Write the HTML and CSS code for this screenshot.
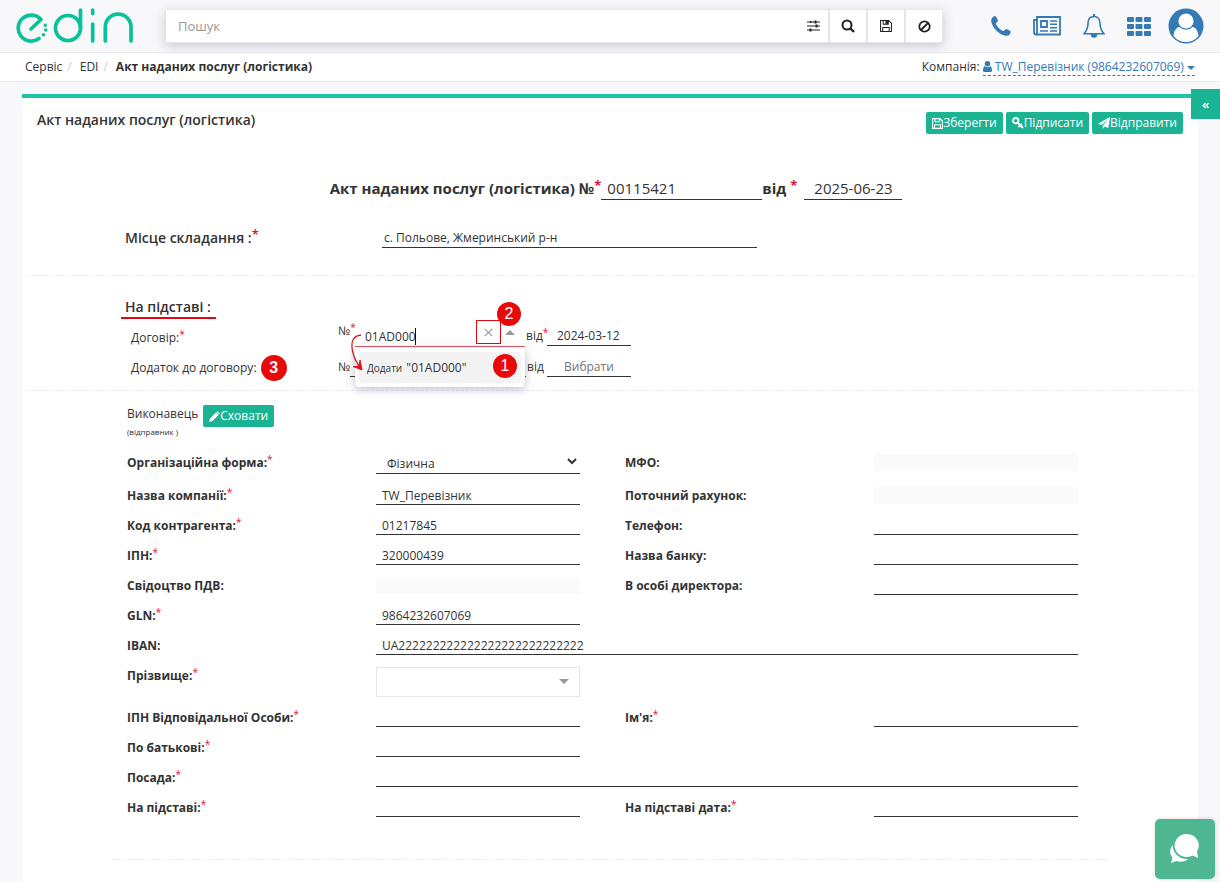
FILE: index.html
```
<!DOCTYPE html>
<html lang="uk">
<head>
    <meta charset="UTF-8">
    <meta name="viewport" content="width=device-width, initial-scale=1.0">
    <title>Акт наданих послуг (логістика)</title>
    <link rel="stylesheet" href="styles.css">
</head>
<body>
    <header class="topbar">
        <a href="#" class="logo" aria-label="edin">
            <svg width="118" height="38" viewBox="16 7 118 38" fill="none" stroke="#0ac29a" stroke-width="3.700" stroke-linecap="round" stroke-linejoin="round">
                <path d="M31 29L41 19.500A13 13 0 1 0 39 38.500"/>
                <circle cx="68" cy="28" r="12.500"/>
                <path d="M80.500 10V28M92.700 10V13.500M92.700 24V41M105.300 41V27A12.800 12.800 0 0 1 131 27V41"/>
                <g fill="#0ac29a" stroke="none">
                    <circle cx="45.300" cy="25.300" r="1.700"/>
                    <circle cx="45.700" cy="30" r="1.800"/>
                    <circle cx="43.500" cy="34.700" r="1.800"/>
                </g>
            </svg>
        </a>
        <form class="search">
            <input type="text" class="search-input" placeholder="Пошук" aria-label="Пошук">
            <button type="button" class="search-btn search-filter" aria-label="Фільтр">
                <svg width="13" height="12" viewBox="0 0 13 12" stroke="#222" fill="#222"><path d="M0 2H13M0 6H13M0 10H13" stroke-width="1.200"/><path d="M7.500.5h2v3h-2zM8.500 4.500h2v3h-2zM2.500 8.500h2v3h-2z" stroke="none"/><path d="M3 1h1.500v2H3z" stroke="none"/></svg>
            </button>
            <button type="button" class="search-btn" aria-label="Шукати">
                <svg width="14" height="14" viewBox="0 0 14 14" fill="none" stroke="#222" stroke-width="2"><circle cx="6" cy="6" r="4.500"/><path d="M9.300 9.300L13 13" stroke-width="2.400"/></svg>
            </button>
            <button type="button" class="search-btn" aria-label="Зберегти пошук">
                <svg width="12" height="12" viewBox="0 0 13 13" fill="none" stroke="#222" stroke-width="1.100"><path d="M.6.6H9.500L12.400 3.500V12.400H.6zM3 12V8H10V12M3.500 1V4.500H9V1"/><path d="M6.500 1H8V4H6.500z" fill="#222"/></svg>
            </button>
            <button type="button" class="search-btn" aria-label="Скинути">
                <svg width="13" height="13" viewBox="0 0 13 13" fill="none" stroke="#222" stroke-width="1.800"><circle cx="6.500" cy="6.500" r="5.200"/><path d="M3 10L10 3"/></svg>
            </button>
        </form>
        <nav class="top-icons">
            <a href="#" aria-label="Телефон"><svg width="20" height="20" viewBox="0 0 20 20" fill="#337ab7"><path d="M1.200 1.700C2.500.6 4 .1 4.900.4C5.600 1.200 6.600 3.700 7 4.800C7.100 5.800 4.800 6.700 4.900 7.700C5.600 10.300 9.500 14.200 12.200 15C13.300 15.200 14.200 12.800 15.300 12.900C16.300 13.300 18.800 14.400 19.600 15.200C19.900 16.200 19.300 18 18.200 19C17 20 14.800 20.100 12.800 19.300C7 17 2.700 12.700.7 7.200C0 5.200 0 3 1.200 1.700z"/></svg></a>
            <a href="#" aria-label="Новини"><svg width="28" height="20" viewBox="0 0 28 20" fill="none" stroke="#337ab7" stroke-width="1.800"><path d="M4 17V1H27V18.500H3C1.500 18.500 1 17.500 1 16.500V4H4M4 17Q4 18.500 2.500 18.500"/><path d="M8 5H14V11H8z"/><path d="M7 15H15M17 5H24M17 8.300H24M17 11.700H24M17 15H24" stroke-width="1.500"/></svg></a>
            <a href="#" aria-label="Сповіщення"><svg width="22" height="24" viewBox="0 0 22 24" fill="none" stroke="#337ab7" stroke-width="1.600"><path d="M11 2.500C7 2.500 5 5.500 5 9.500C5 14.500 3.500 17 1 19.800H21C18.500 17 17 14.500 17 9.500C17 5.500 15 2.500 11 2.500z"/><path d="M11 0V3" stroke-width="2"/><path d="M8.500 20.500a2.500 2.500 0 0 0 5 0z" fill="#337ab7"/></svg></a>
            <a href="#" aria-label="Додатки"><svg width="24" height="19" viewBox="0 0 24 19" fill="#337ab7"><rect width="7" height="5" rx="1"/><rect x="8.500" width="7" height="5" rx="1"/><rect x="17" width="7" height="5" rx="1"/><rect y="7" width="7" height="5" rx="1"/><rect x="8.500" y="7" width="7" height="5" rx="1"/><rect x="17" y="7" width="7" height="5" rx="1"/><rect y="14" width="7" height="5" rx="1"/><rect x="8.500" y="14" width="7" height="5" rx="1"/><rect x="17" y="14" width="7" height="5" rx="1"/></svg></a>
            <a href="#" aria-label="Профіль"><svg width="36" height="36" viewBox="0 0 36 36"><circle cx="18" cy="18" r="17.500" fill="#337ab7"/><path d="M5.500 28C6 22.500 8.500 19.500 11.500 19A9 9 0 0 0 24.500 19C27.500 19.500 30 22.500 30.500 28A16 16 0 0 1 5.500 28z" fill="#fff"/><circle cx="18" cy="13" r="7.600" fill="#fff"/></svg></a>
        </nav>
    </header>

    <div class="breadcrumb-bar">
        <nav class="breadcrumb">
            <a href="#">Сервіс</a><span class="sep">/</span><a href="#">EDI</a><span class="sep">/</span><strong>Акт наданих послуг (логістика)</strong>
        </nav>
        <div class="company">Компанія:
            <a href="#" class="company-link"><svg width="9" height="11" viewBox="0 0 9 11" fill="#337ab7"><circle cx="4.500" cy="2.800" r="2.700"/><path d="M1.500 5Q4.500 7.500 7.500 5Q9 6 9 9.500Q9 11 7.500 11H1.500Q0 11 0 9.500Q0 6 1.500 5z"/></svg> TW_Перевізник (9864232607069) <span class="caret"></span></a>
        </div>
    </div>

    <main class="panel">
        <button type="button" class="side-toggle" aria-label="Розгорнути">«</button>
        <div class="panel-head">
            <h1 class="panel-title">Акт наданих послуг (логістика)</h1>
            <div class="actions">
                <button type="button" class="btn"><svg width="11" height="11" viewBox="0 0 13 13" fill="none" stroke="#fff" stroke-width="1.300"><path d="M.7.7H9.500L12.300 3.500V12.300H.7zM3 12V8H10V12M3.500 1V4.500H9V1"/></svg>Зберегти</button>
                <button type="button" class="btn"><svg width="12" height="12" viewBox="0 0 12 12" fill="none" stroke="#fff" stroke-width="1.800"><circle cx="3.700" cy="3.700" r="2.700"/><path d="M5.500 5.500L11 11M8 8.500L6.500 10M10 7L8.500 8.500"/></svg>Підписати</button>
                <button type="button" class="btn"><svg width="12" height="12" viewBox="0 0 12 12" fill="#fff"><path d="M12 0L10.300 11L6.700 9.400L4.800 12V8.700L10 2.500L3.500 8L0 6.700z"/></svg>Відправити</button>
            </div>
        </div>

        <div class="doc-title">
            <label for="docNumber">Акт наданих послуг (логістика) №<sup>*</sup></label>
            <input type="text" id="docNumber" class="line-input doc-number" value="00115421">
            <label for="docDate">від <sup>*</sup></label>
            <input type="text" id="docDate" class="line-input doc-date" value="2025-06-23">
        </div>

        <div class="place-row">
            <label for="place" class="section-label">Місце складання :<sup>*</sup></label>
            <input type="text" id="place" class="line-input place-input" value="с. Польове, Жмеринський р-н">
        </div>

        <section class="basis">
            <h2 class="section-label basis-title">На підставі :</h2>
            <div class="basis-row">
                <span class="basis-name">Договір:<sup>*</sup></span>
                <label for="contract" class="num-label">№<sup>*</sup></label>
                <div class="combo">
                    <input type="text" id="contract" class="combo-input" value="01AD000">
                    <i class="cursor"></i>
                    <button type="button" class="combo-clear" aria-label="Очистити"><svg width="9" height="9" viewBox="0 0 9 9" stroke="#999" stroke-width="1.200"><path d="M.8.8L8.200 8.200M8.200.8L.8 8.200"/></svg></button>
                    <span class="caret caret-up"></span>
                    <span class="badge badge-clear">2</span>
                    <svg class="arrow" width="16" height="38" viewBox="0 0 16 38" fill="none" stroke="#d91a24" stroke-width="1.300"><path d="M11 1C2 2 1 9 2.500 17Q5 28 11 34"/><path d="M12 36L3 32.500L9 32L10 26z" fill="#e30613" stroke-width="1"/></svg>
                    <div class="combo-menu">
                        <button type="button" class="combo-option"><small>Додати</small> "01AD000"</button>
                        <span class="badge badge-option">1</span>
                    </div>
                </div>
                <label for="contractDate" class="date-label">від<sup>*</sup></label>
                <input type="text" id="contractDate" class="line-input date-input" value="2024-03-12">
            </div>
            <div class="basis-row basis-row-addition">
                <span class="basis-name">Додаток до договору: <span class="badge badge-addition">3</span></span>
                <label for="addition" class="num-label">№</label>
                <input type="text" id="addition" class="line-input addition-input">
                <label for="additionDate" class="date-label">від</label>
                <input type="text" id="additionDate" class="line-input date-input" placeholder="Вибрати">
            </div>
        </section>

        <section class="party">
            <div class="party-head">
                <div class="party-name">Виконавець<small>(відправник )</small></div>
                <button type="button" class="btn"><svg width="11" height="11" viewBox="0 0 11 11" fill="#fff"><path d="M0 11L1 7.500L7 1.500L9.500 4L3.500 10zM7.700.8Q8.500 0 9.300.8L10.200 1.700Q11 2.500 10.200 3.300L10 3.500L7.500 1z"/></svg>Сховати</button>
            </div>

            <div class="field-row field-row-first">
                <label for="orgForm">Організаційна форма:<sup>*</sup></label>
                <div class="field"><select id="orgForm" class="line-input"><option>Фізична</option><option>Юридична</option></select></div>
                <label for="mfo">МФО:</label>
                <div class="field"><input type="text" id="mfo" class="readonly" readonly></div>
            </div>
            <div class="field-row">
                <label for="companyName">Назва компанії:<sup>*</sup></label>
                <div class="field"><input type="text" id="companyName" class="line-input" value="TW_Перевізник"></div>
                <label for="account">Поточний рахунок:</label>
                <div class="field"><input type="text" id="account" class="readonly" readonly></div>
            </div>
            <div class="field-row">
                <label for="code">Код контрагента:<sup>*</sup></label>
                <div class="field"><input type="text" id="code" class="line-input" value="01217845"></div>
                <label for="phone">Телефон:</label>
                <div class="field"><input type="text" id="phone" class="line-input"></div>
            </div>
            <div class="field-row">
                <label for="ipn">ІПН:<sup>*</sup></label>
                <div class="field"><input type="text" id="ipn" class="line-input" value="320000439"></div>
                <label for="bank">Назва банку:</label>
                <div class="field"><input type="text" id="bank" class="line-input"></div>
            </div>
            <div class="field-row">
                <label for="vat">Свідоцтво ПДВ:</label>
                <div class="field"><input type="text" id="vat" class="readonly" readonly></div>
                <label for="director">В особі директора:</label>
                <div class="field"><input type="text" id="director" class="line-input"></div>
            </div>
            <div class="field-row">
                <label for="gln">GLN:<sup>*</sup></label>
                <div class="field"><input type="text" id="gln" class="line-input" value="9864232607069"></div>
            </div>
            <div class="field-row">
                <label for="iban">IBAN:</label>
                <div class="field field-wide"><input type="text" id="iban" class="line-input" value="UA222222222222222222222222222"></div>
            </div>
            <div class="field-row field-row-tall">
                <label for="surname">Прізвище:<sup>*</sup></label>
                <div class="field box-wrap"><select id="surname" class="box-select"><option></option></select><span class="caret caret-box"></span></div>
            </div>
            <div class="field-row">
                <label for="personIpn">ІПН Відповідальної Особи:<sup>*</sup></label>
                <div class="field"><input type="text" id="personIpn" class="line-input"></div>
                <label for="firstName">Ім'я:<sup>*</sup></label>
                <div class="field"><input type="text" id="firstName" class="line-input"></div>
            </div>
            <div class="field-row">
                <label for="patronymic">По батькові:<sup>*</sup></label>
                <div class="field"><input type="text" id="patronymic" class="line-input"></div>
            </div>
            <div class="field-row">
                <label for="position">Посада:<sup>*</sup></label>
                <div class="field field-wide"><input type="text" id="position" class="line-input"></div>
            </div>
            <div class="field-row">
                <label for="basis">На підставі:<sup>*</sup></label>
                <div class="field"><input type="text" id="basis" class="line-input"></div>
                <label for="basisDate">На підставі дата:<sup>*</sup></label>
                <div class="field"><input type="text" id="basisDate" class="line-input"></div>
            </div>
        </section>
    </main>

    <button type="button" class="chat" aria-label="Чат">
        <svg width="30" height="30" viewBox="0 0 30 30" fill="#fff"><path d="M17 0A12 11.500 0 1 0 22.500 21.500L28 24L27 17.500A12 11.500 0 0 0 17 0z"/><path d="M2.500 11C-1 16 0 21 2.500 23.500L1 29L6.500 27C11 28.500 15.500 27.500 18 25C9 25.500 3 19 2.500 11z"/></svg>
    </button>
</body>
</html>
```
FILE: styles.css
```
* {
    box-sizing: border-box;
}
body {
    display: flex;
    flex-direction: column;
    min-height: 100vh;
    margin: 0;
    background: #f8f8fb;
    color: #333;
    font-family: "Open Sans", "Noto Sans", sans-serif;
    font-size: 12px;
    line-height: 18px;
}
input, select, button {
    font: inherit;
    color: inherit;
}
button {
    padding: 0;
    border: 0;
    background: none;
    cursor: pointer;
}
input:focus {
    outline: none;
}
svg {
    flex: none;
}
sup {
    color: #e0103a;
    font-size: 10px;
    font-weight: 400;
    line-height: 0;
    vertical-align: 4px;
}

/* top bar */
.topbar {
    display: flex;
    align-items: center;
    height: 53px;
    padding: 0 16px;
    border-bottom: 1px solid #e7eaec;
}
.logo svg {
    display: block;
}
.search {
    display: flex;
    flex: 1;
    max-width: 778px;
    height: 34px;
    margin-left: 31px;
    border: 1px solid #e5e6e7;
    background: #fff;
    box-shadow: 0 3px 10px rgba(60, 60, 90, 0.25);
}
.search-input {
    flex: 1;
    min-width: 0;
    padding: 0 12px;
    border: 0;
    font-size: 13px;
}
.search-input::placeholder {
    color: #999;
}
.search-btn {
    display: flex;
    align-items: center;
    justify-content: center;
    width: 38px;
    border-left: 2px solid #e5e6e7;
}
.search-filter {
    width: 30px;
    border-left: 0;
}
.top-icons {
    display: flex;
    align-items: center;
    gap: 22px;
    margin-left: auto;
}
.top-icons a {
    display: flex;
}
.top-icons a:last-child {
    margin-left: -5px;
}

/* breadcrumb */
.breadcrumb-bar {
    display: flex;
    justify-content: space-between;
    align-items: center;
    height: 29px;
    padding: 0 25px;
    background: #fff;
    border-bottom: 1px solid #e7eaec;
}
.breadcrumb a {
    color: #333;
    text-decoration: none;
}
.breadcrumb .sep {
    padding: 0 8px 0 5px;
    color: #ccc;
}
.company-link {
    color: #337ab7;
    text-decoration: none;
    border-bottom: 1px dashed #337ab7;
}
.company-link svg {
    vertical-align: -1px;
}
.caret {
    display: inline-block;
    border: 4px solid transparent;
    border-top-color: #337ab7;
    border-bottom: 0;
    vertical-align: middle;
}

/* panel */
.panel {
    position: relative;
    flex: 1;
    margin: 12px 22px 0;
    border-top: 4px solid #1dc3a2;
    background: #fff;
}
.side-toggle {
    position: absolute;
    top: -9px;
    right: -22px;
    width: 29px;
    height: 30px;
    background: #1ab394;
    color: #fff;
    font-size: 13px;
    font-weight: 600;
}
.panel-head {
    display: flex;
    justify-content: space-between;
    height: 71px;
    padding: 14px 15px 0;
}
.panel-title {
    margin: -1px 0 0;
    font-size: 14px;
    font-weight: 600;
}
.actions {
    display: flex;
    gap: 3px;
}
.btn {
    display: flex;
    align-items: center;
    height: 22px;
    padding: 0 6px;
    border-radius: 2px;
    background: #1ab394;
    color: #fff;
    font-size: 12px;
    font-weight: 500;
}
.line-input {
    width: 100%;
    height: 24px;
    padding: 4px 6px 0;
    border: 0;
    border-bottom: 1px solid #333;
    background: transparent;
}

/* document header */
.doc-title {
    display: flex;
    justify-content: center;
    align-items: center;
    height: 39px;
    padding: 0 0 1px 12px;
    font-size: 15px;
    font-weight: 700;
}
.doc-title sup {
    font-size: 13px;
    font-weight: 700;
    vertical-align: 4px;
}
.doc-number, .doc-date {
    font-weight: 400;
    padding-top: 0;
}
.doc-number {
    width: 161px;
}
.doc-date {
    width: 98px;
    margin-left: 7px;
    padding: 0 10px;
}
.place-row {
    display: flex;
    align-items: center;
    height: 68px;
    margin: 0 4px;
    padding: 0 0 8px 99px;
    border-bottom: 1px dashed #e7eaec;
}
.section-label {
    font-size: 14px;
    font-weight: 600;
}
.place-row .section-label {
    width: 257px;
}
.place-input {
    width: 375px;
    height: 20px;
    padding: 1px 2px 0;
}
.place-row sup {
    font-size: 13px;
    font-weight: 600;
}

/* basis */
.basis {
    height: 115px;
    margin: 0 4px;
    padding: 20px 0 0 95px;
    border-bottom: 1px dashed #e7eaec;
}
.basis-title {
    width: 95px;
    margin: 0;
    padding: 2px 0 1px 4px;
    border-bottom: 2px solid #e30613;
}
.basis-row {
    display: flex;
    height: 30px;
    padding: 7px 0 0 10px;
}
.basis-name {
    width: 207px;
    padding-top: 3px;
}
.num-label {
    width: 17px;
    margin-top: -4px;
    white-space: nowrap;
}
.basis-row .line-input {
    height: 20px;
    padding-top: 0;
}
.combo {
    position: relative;
    width: 170px;
}
.combo-input {
    width: 170px;
    height: 21px;
    padding: 0 10px;
    border: 0;
    border-bottom: 1px solid #e0586c;
}
.cursor {
    position: absolute;
    left: 60px;
    top: 2px;
    height: 17px;
    border-left: 1px solid #111;
}
.combo-clear {
    position: absolute;
    top: -6px;
    right: 24px;
    display: flex;
    align-items: center;
    justify-content: center;
    width: 25px;
    height: 24px;
    border: 1px solid #e30613;
}
.caret-up {
    position: absolute;
    top: 4px;
    right: 10px;
    border: 5px solid transparent;
    border-top: 0;
    border-bottom-color: #999;
}
.badge {
    display: inline-block;
    width: 24px;
    height: 24px;
    border-radius: 50%;
    background: #e80a0a;
    color: #fff;
    font-family: "Liberation Sans", Arial, sans-serif;
    font-size: 16px;
    line-height: 24px;
    text-align: center;
}
.badge-clear {
    position: absolute;
    top: -24px;
    right: 4px;
}
.badge-option {
    position: absolute;
    top: 6px;
    right: 8px;
}
.badge-addition {
    width: 26px;
    height: 26px;
    margin: -6px 0 -4px 1px;
    font-weight: 700;
    line-height: 26px;
    vertical-align: middle;
}
.arrow {
    position: absolute;
    z-index: 3;
    top: 8px;
    left: -5px;
}
.combo-menu {
    position: absolute;
    z-index: 2;
    top: 22px;
    left: 0;
    width: 170px;
    padding: 4px;
    border-radius: 4px;
    background: #fff;
    box-shadow: 0 2px 8px rgba(60, 60, 110, 0.35);
}
.combo-option {
    width: 100%;
    height: 31px;
    padding: 0 8px;
    border-radius: 3px;
    background: #f3f3f3;
    text-align: left;
}
.combo-option small {
    margin-right: 1px;
    font-size: 10px;
}
.date-label {
    width: 22px;
    padding: 1px 0 0 1px;
    white-space: nowrap;
}
.basis-row .date-input {
    width: 84px;
    padding: 0 10px;
}
.basis-row-addition {
    padding-top: 8px;
}
.basis-row-addition .basis-name {
    padding-top: 2px;
}
.basis-row-addition .num-label {
    width: 12px;
    margin-top: 0;
    padding-top: 1px;
}
.addition-input {
    width: 176px;
}
.basis-row-addition .date-label {
    width: 21px;
}
.basis-row-addition .date-input {
    padding: 0 17px;
}

/* party form */
.party {
    margin: 0 90px;
    padding: 14px 0 36px;
    border-bottom: 1px dashed #e7eaec;
}
.party-head {
    display: flex;
    align-items: flex-start;
    gap: 5px;
    height: 43px;
    padding-left: 15px;
}
.party-name small {
    display: block;
    font-size: 8px;
}
.field-row {
    display: grid;
    grid-template-columns: repeat(4, 1fr);
    height: 30px;
}
.field-row-first {
    height: 33px;
}
.field-row-tall {
    height: 42px;
}
.field-row > label {
    padding: 6px 0 0 15px;
    font-weight: 700;
    white-space: nowrap;
}
.field {
    padding: 0 30px 0 15px;
}
.field-wide {
    grid-column: 2 / 5;
}
.field .line-input {
    padding-top: 5px;
}
.field select.line-input {
    height: 26px;
    padding: 6px 3px 0 7px;
}
.readonly {
    display: block;
    width: 100%;
    height: 17px;
    margin-top: 6px;
    border: 0;
    background: #fafafa;
}
.box-wrap {
    position: relative;
    padding-top: 6px;
}
.box-select {
    width: 100%;
    height: 30px;
    border: 1px solid #e5e6e7;
    background: #fff;
    appearance: none;
}
.caret-box {
    position: absolute;
    top: 18px;
    right: 41px;
    border-width: 5px 5px 0;
    border-top-color: #999;
}

/* chat */
.chat {
    position: fixed;
    right: 5px;
    bottom: 3px;
    display: flex;
    align-items: center;
    justify-content: center;
    width: 60px;
    height: 60px;
    border-radius: 5px;
    background: #4eb690;
    box-shadow: 0 0 4px rgba(0, 0, 0, 0.15);
}
```
